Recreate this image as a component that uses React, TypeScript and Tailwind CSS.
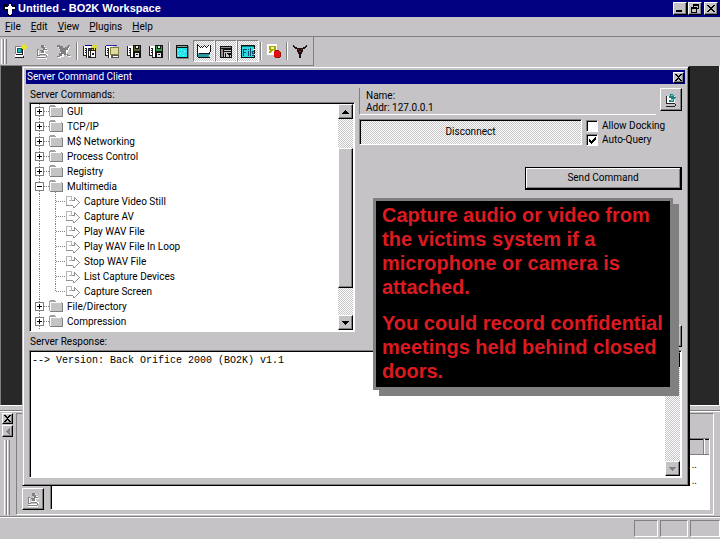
import { useState, type ReactNode } from "react";
import clsx from "clsx";

const raised =
  "border border-t-white border-l-white border-r-black border-b-black shadow-[inset_-1px_-1px_0_#808080] bg-[#c5c3c6]";
const sunken =
  "border border-t-[#808080] border-l-[#808080] border-r-white border-b-white";
const sunkenDeep =
  "border border-t-[#808080] border-l-[#808080] border-r-white border-b-white shadow-[inset_1px_1px_0_#000]";
const dither =
  "bg-[conic-gradient(#fff_25%,#c5c3c6_0_50%,#fff_0_75%,#c5c3c6_0)] bg-[length:2px_2px]";

const menuItems = ["File", "Edit", "View", "Plugins", "Help"];

interface TreeItem {
  label: string;
  kind: "folder" | "command";
  open?: boolean;
  last?: boolean;
}

const treeItems: TreeItem[] = [
  { label: "GUI", kind: "folder" },
  { label: "TCP/IP", kind: "folder" },
  { label: "M$ Networking", kind: "folder" },
  { label: "Process Control", kind: "folder" },
  { label: "Registry", kind: "folder" },
  { label: "Multimedia", kind: "folder", open: true },
  { label: "Capture Video Still", kind: "command" },
  { label: "Capture AV", kind: "command" },
  { label: "Play WAV File", kind: "command" },
  { label: "Play WAV File In Loop", kind: "command" },
  { label: "Stop WAV File", kind: "command" },
  { label: "List Capture Devices", kind: "command" },
  { label: "Capture Screen", kind: "command", last: true },
  { label: "File/Directory", kind: "folder" },
  { label: "Compression", kind: "folder" },
];

function Icon({ w = 16, h = 16, children }: { w?: number; h?: number; children: ReactNode }) {
  return (
    <svg
      width={w}
      height={h}
      viewBox={`0 0 ${w} ${h}`}
      shapeRendering="crispEdges"
      className="shrink-0"
      aria-hidden="true"
    >
      {children}
    </svg>
  );
}

/* Toolbar icons */
const NewServerIcon = () => (
  <Icon>
    <path d="M3 3h9v9H3z" fill="#fff" />
    <path d="M3 3h8v1H4v7H3z" fill="#808080" />
    <path d="M11 5v7H4v-1h6V5zM3 14h9v1H3zM11 13h1v1h-1z" fill="#202020" />
    <path d="M5 5h5v5H5z" fill="#105860" />
    <path d="M6 6h3v3H6z" fill="#18b8c0" />
    <path d="M3 12h8v2H3z" fill="#fff" />
    <path d="M11 1h2v6h-2zM9 3h6v2H9zM10 2h1v1h-1zM13 2h1v1h-1zM10 5h1v1h-1zM13 5h1v1h-1z" fill="#e8e428" />
  </Icon>
);

const ConnectIcon = () => (
  <Icon>
    <path d="M4 7h1v5H4zM4 12h2v1h6v1H4zM6 10h6v1h2v2h-2v-1H6zM10 3h1v2h2v2h1v1h-3v2h-1V7h2V6h-2zM3 15h10v1H3z" fill="#fff" />
    <path d="M3 6h2v1H4v5h2v-1h6v1H6v1H3zM7 2h3v2h1v2h2v1h-3v3H7V8H6V7h3V5H7zM3 14h9v1H3zM12 12h1v2h-1z" fill="#808080" />
  </Icon>
);

const DisconnectIcon = () => (
  <Icon>
    <path d="M2 4h3v1h2v2h2V6h2V5h1V4h2v1h-1v2h-1v2h-1v3h2v1h2v1h-3v-1h-2v-1H8v2H5v1H2v-1h2v-3h2v-1H4V7H3V5H2z" fill="#fff" />
    <path d="M1 2h3v1h3v2h2V4h2V3h1V2h2v1h-1v2h-1v2h-2v4h2v1h2v1h-3v-1H8v-1H6v2H4v1H1v-1h2v-3h2V9H4V6H3V4H1z" fill="#808080" />
    <path d="M7 5h2v3H7zM5 9h4v2H5z" fill="#808080" />
  </Icon>
);

const Pages = () => (
  <>
    <path d="M1 3h8v9H1z" fill="#fff" />
    <path d="M1 3h1v9H1zM1 12h4v1H1zM3 5h1v1H3zM3 7h1v1H3zM3 9h1v1H3zM4 5h1v9H4zM4 14h3v1H4z" fill="#222" />
    <path d="M5 5h8v10H5z" fill="#fff" />
  </>
);

const WorkspaceNewIcon = () => (
  <Icon>
    <Pages />
    <path d="M3 2h7v1H3z" fill="#000080" />
    <path d="M6 5h8v10H6z" fill="#222" />
    <path d="M7 6h5v1H7z" fill="#2828b0" />
    <path d="M7 8h1v5H7zM9 8h4v6H9z" fill="#fff" />
    <path d="M10 10h2v2h-2z" fill="#222" />
    <path d="M10 4h5v1h-5zM12 2h1v5h-1zM10 2h1v1h-1zM14 2h1v1h-1zM10 6h1v1h-1zM14 6h1v1h-1z" fill="#e8e020" />
  </Icon>
);

const WorkspaceOpenIcon = () => (
  <Icon>
    <Pages />
    <path d="M2 2h11v1H2z" fill="#2828b0" />
    <path d="M6 4h9v8H6z" fill="#808040" />
    <path d="M7 5h7v6H7z" fill="#e0dca0" />
    <path d="M7 12h8v3H7z" fill="#555" />
    <path d="M9 13h5v1H9z" fill="#fff" />
  </Icon>
);

const WorkspaceSaveIcon = ({ color }: { color: string }) => (
  <Icon>
    <Pages />
    <path d="M7 2h8v13H7zM5 14h2v1H5z" fill="#111" />
    <path d="M8 3h1v5H8zM13 3h1v5h-1zM9 6h4v2H9z" fill={color} />
    <path d="M10 3h2v2h-2zM9 10h4v4H9z" fill="#e8e8e8" />
    <path d="M10 11h2v1h-2z" fill="#111" />
  </Icon>
);

const WindowIcon = () => (
  <Icon>
    <path d="M3 3h12v13H3z" fill="#808080" />
    <path d="M2 2h12v13H2z" fill="#111" />
    <path d="M3 5h10v9H3z" fill="#22e4ec" />
    <path d="M3 3h10v1H3z" fill="#70a8a8" />
    <path d="M4 7h1v1H4zM7 6h1v1H7zM10 8h1v1h-1zM6 10h1v1H6zM9 12h1v1H9zM4 12h1v1H4z" fill="#a8ffff" />
  </Icon>
);

const TornPageIcon = () => (
  <Icon>
    <path d="M1 2h2v1h1v1h1V3h1v1h1V3h1V2h1v1h1v1h1V3h1V2h2v7h-1v1H1z" fill="#fff" />
    <path d="M1 1h1v13H1zM2 2h1v1H2zM3 3h1v1H3zM4 4h1v1H4zM5 3h1v1H5zM6 4h1v1H6zM7 3h1v1H7zM8 2h1v1H8zM9 3h1v1H9zM10 4h1v1h-1zM11 3h1v1h-1zM12 2h1v1h-1zM14 2h1v7h-1zM13 9h1v1h-1zM2 14h12v1H2z" fill="#111" />
    <path d="M2 11h12v1H2zM2 12h11v2H2z" fill="#2a9aa0" />
    <path d="M2 5h12v4H2z" fill="#fff" />
    <path d="M3 10h11v1H3z" fill="#111" />
  </Icon>
);

const DockIcon = () => (
  <Icon>
    <path d="M2 3h12v12H2z" fill="#111" />
    <path d="M3 4h10v1H3zM3 6h2v8H3z" fill="#909090" />
    <path d="M6 7h7v7H6z" fill="#c8c8c8" />
    <path d="M6 8h7v1H6zM7 10h1v4H7zM9 10h5v1H9zM10 11h3v1h-3zM11 12h1v2h-1z" fill="#111" />
  </Icon>
);

const FileWindowIcon = () => (
  <Icon>
    <path d="M1 2h14v13H1z" fill="#111" />
    <path d="M2 4h12v10H2z" fill="#28dce4" />
    <path d="M2 3h12v1H2z" fill="#008080" />
    <path
      d="M3 6h4v1H4v2h2v1H4v3H3zM8 6h1v1H8zM8 8h1v5H8zM10 5h1v8h-1zM12 8h2v1h-1v1h1v1h-2v1h2v1h-2z"
      fill="#064a70"
    />
    <path d="M13 6h2v1h-2zM14 11h1v1h-1z" fill="#fff" />
  </Icon>
);

const PluginIcon = () => (
  <Icon>
    <path d="M1 1h10v11H1z" fill="#fff" />
    <path d="M3 3h7v5H8V7H7v1H6v1H5v1H3V8h1V7H3z" fill="#a8a800" />
    <path d="M5 4h3v2H5z" fill="#f4f0b0" />
    <path d="M8 8h6v6H8z" fill="#e01010" />
    <path d="M9 7h4v1H9zM14 9h1v5h-1zM9 14h5v1H9z" fill="#901010" />
  </Icon>
);

const BullIcon = () => (
  <Icon>
    <path
      d="M1 2h1v1h1v1h2v1h6V4h2V3h1V2h1v2h-1v1h-1v1h-2v3h-1v2H9v4H7v-4H6V9H5V6H3V5H2V4H1z"
      fill="#1a1010"
    />
    <path d="M6 6h1v1H6zM9 6h1v1H9zM7 8h2v1H7z" fill="#b02020" />
  </Icon>
);

function ToolButton({ label, pressed, children }: { label: string; pressed?: boolean; children: ReactNode }) {
  return (
    <button
      type="button"
      aria-label={label}
      aria-pressed={pressed}
      className={clsx(
        "flex h-[22px] w-[22px] items-center justify-center",
        pressed && sunken,
        pressed && dither
      )}
    >
      {children}
    </button>
  );
}

const Separator = () => <div className="mx-px h-[18px] w-[2px] border-l border-[#808080] bg-white" />;

function CaptionButton({ label, children }: { label: string; children: ReactNode }) {
  return (
    <button type="button" aria-label={label} className={clsx("flex h-[13px] w-[14px] items-center justify-center", raised)}>
      <Icon w={10} h={9}>{children}</Icon>
    </button>
  );
}

function CloseBox({ label }: { label: string }) {
  return (
    <button type="button" aria-label={label} className={clsx("flex h-[11px] w-[11px] items-center justify-center", raised)}>
      <Icon w={7} h={7}>
        <path d="M0 0h2v1h1v1h1V1h1V0h2v1H6v1H5v1H4v1h1v1h1v1h1v1H5V6H4V5H3v1H2v1H0V6h1V5h1V4h1V3H2V2H1V1H0z" fill="#000" />
      </Icon>
    </button>
  );
}

function ArrowButton({ up, disabled }: { up?: boolean; disabled?: boolean }) {
  return (
    <button
      type="button"
      disabled={disabled}
      aria-label={up ? "Scroll up" : "Scroll down"}
      className={clsx("flex h-[15px] w-full shrink-0 items-center justify-center", raised)}
    >
      <Icon w={7} h={4}>
        <path d={up ? "M3 0h1v1h1v1h1v1h1v1H0V3h1V2h1V1h1z" : "M0 0h7v1H6v1H5v1H4v1H3V3H2V2H1V1H0z"} fill={disabled ? "#808080" : "#000"} />
      </Icon>
    </button>
  );
}

const dots = { stroke: "#808080", strokeWidth: 1, strokeDasharray: "1 1" };

function TreeRow({ item }: { item: TreeItem }) {
  const isFolder = item.kind === "folder";
  return (
    <li className="flex h-[15px] items-center gap-1 whitespace-nowrap">
      {isFolder ? (
        <Icon w={32} h={15}>
          <path d="M8.5 0v15M13 7.5h5" {...dots} />
          {item.open && <path d="M24.5 13v2" {...dots} />}
          <rect x="4.5" y="3.5" width="8" height="8" fill="#fff" stroke="#808080" />
          <path d={item.open ? "M6 7h5v1H6z" : "M6 7h5v1H6zM8 5h1v5H8z"} fill="#000" />
          <path d="M19 1h5v1h1v1h6v1H19z" fill="#a0a0a0" />
          <path d="M18 2h1v10h-1zM19 3h12v9H19z" fill="#a0a0a0" />
          <path d="M20 4h11v8H20z" fill="#c4c4c4" />
          <path d="M19 3h11v1H19zM19 4h1v8h-1z" fill="#fff" />
          <path d="M31 4h1v9H19v-1h12z" fill="#808080" />
        </Icon>
      ) : (
        <Icon w={49} h={15}>
          <path d={item.last ? "M8.5 0v15M24.5 0v8M25 7.5h9" : "M8.5 0v15M24.5 0v15M25 7.5h9"} {...dots} />
          <path d="M35 2h1v9h-1zM36 2h4v1h-4zM40 2h1v5h-1zM38 6h2v1h-2z" fill="#b8b8b8" />
          <path d="M35 11h7v1h-7zM41 6h2v1h-2zM42 12h1v2h-1zM43 3h1v4h-1zM44 4h1v1h-1zM45 5h1v1h-1zM46 6h1v1h-1zM47 7h1v1h-1zM48 8h1v1h-1zM47 9h1v1h-1zM46 10h1v1h-1zM45 11h1v1h-1zM44 12h1v1h-1zM43 13h1v1h-1z" fill="#909090" />
        </Icon>
      )}
      <span>{item.label}</span>
    </li>
  );
}

function DialogCheckbox({ label, checked, onChange }: { label: string; checked: boolean; onChange: () => void }) {
  return (
    <label className="flex h-[14px] items-center gap-1">
      <span className={clsx("relative flex h-[12px] w-[12px] items-center justify-center bg-white", sunkenDeep)}>
        <input type="checkbox" checked={checked} onChange={onChange} className="absolute inset-0 m-0 opacity-0" />
        {checked && (
          <Icon w={7} h={7}>
            <path d="M0 2h1v1h1v1h1V3h1V2h1V1h1V0h1v3H6v1H5v1H4v1H3v1H2V6H1V5H0z" fill="#000" />
          </Icon>
        )}
      </span>
      {label}
    </label>
  );
}

function ServerCommandDialog() {
  const [allowDocking, setAllowDocking] = useState(false);
  const [autoQuery, setAutoQuery] = useState(true);

  return (
    <section
      aria-label="Server Command Client"
      className="absolute top-[66px] right-[30px] bottom-[54px] left-[22px] flex flex-col border-t border-r-2 border-b border-l border-t-[#c5c3c6] border-r-black border-b-black border-l-[#c5c3c6] bg-[#c5c3c6] p-[3px] shadow-[inset_1px_1px_0_#fff,inset_-1px_-1px_0_#808080]"
    >
      <header className="flex h-[14px] shrink-0 items-center justify-between bg-[#000080] pr-px pl-px text-white">
        <h2>Server Command Client</h2>
        <CloseBox label="Close dialog" />
      </header>

      <div className="flex min-h-0 flex-1 flex-col pr-[3px] pb-1 pl-[3px]">
        <div className="flex pt-1">
          {/* Command tree */}
          <div className="flex w-[326px] shrink-0 flex-col">
            <h3 className="h-[14px] pl-px leading-[14px]">Server Commands:</h3>
            <div className={clsx("flex h-[230px] bg-white p-px", sunkenDeep)}>
              <ul className="min-w-0 flex-1 overflow-hidden">
                {treeItems.map((item) => (
                  <TreeRow key={item.label} item={item} />
                ))}
              </ul>
              <div className={clsx("flex w-[15px] shrink-0 flex-col", dither)}>
                <ArrowButton up />
                <div className={clsx("mt-[29px] h-[140px]", raised)} />
                <div className="flex-1" />
                <ArrowButton />
              </div>
            </div>
            <label htmlFor="response" className="h-[18px] pt-[3px] pl-px leading-[14px]">
              Server Response:
            </label>
          </div>

          {/* Connection panel */}
          <div className="flex min-w-0 flex-1 flex-col pb-[3px] pl-1">
            <div className="flex items-start gap-1">
              <div className="h-[27px] min-w-0 flex-1 border-b border-l border-b-white border-l-[#808080] pt-[2px] pl-[6px] leading-[12px]">
                <p>Name:</p>
                <p>Addr: 127.0.0.1</p>
              </div>
              <button type="button" aria-label="Server properties" className={clsx("flex h-[23px] w-[22px] items-center justify-center", raised)}>
                <Icon w={12} h={14}>
                  <path d="M2 3h8v7H2z" fill="#fff" />
                  <path d="M1 3h1v7h8v1H1zM1 13h9v1H1zM10 11h1v2h-1z" fill="#222" />
                  <path d="M5 1h3v1h1v2h2v1h-1v1H9v3H4V7h2V5H4V3h1z" fill="#1c8080" />
                  <path d="M6 2h2v1H6zM6 6h2v2H6z" fill="#70d0d0" />
                </Icon>
              </button>
            </div>
            <div className="mt-[4px] flex items-start gap-1">
              <button type="button" className={clsx("h-[26px] min-w-0 flex-1", sunkenDeep, dither)}>
                Disconnect
              </button>
              <div className="w-[96px]">
                <DialogCheckbox label="Allow Docking" checked={allowDocking} onChange={() => setAllowDocking(!allowDocking)} />
                <DialogCheckbox label="Auto-Query" checked={autoQuery} onChange={() => setAutoQuery(!autoQuery)} />
              </div>
            </div>
            <button type="button" className="mt-5 h-[23px] w-[157px] self-end border border-r-2 border-b-2 border-black shadow-[inset_1px_1px_0_#fff,inset_-1px_-1px_0_#808080]">
              Send Command
            </button>
            <button
              type="button"
              aria-label="Clear response"
              className={clsx("mt-auto h-[22px] w-[80px] self-end", raised)}
            />
          </div>
        </div>

        {/* Server response */}
        <div className={clsx("flex min-h-0 flex-1 bg-white p-px", sunkenDeep)}>
          <textarea
            id="response"
            readOnly
            defaultValue="--> Version: Back Orifice 2000 (BO2K) v1.1"
            className="min-w-0 flex-1 resize-none overflow-hidden pt-[3px] pl-px font-['Liberation_Mono',monospace] text-[10px] leading-[12px] outline-none"
          />
          <div className={clsx("flex w-[15px] shrink-0 flex-col justify-between", dither)}>
            <ArrowButton up disabled />
            <ArrowButton disabled />
          </div>
        </div>
      </div>
    </section>
  );
}

export default function App() {
  return (
    <div className="relative flex min-h-screen flex-col overflow-hidden bg-[#c5c3c6] font-[Roboto,'Liberation_Sans',sans-serif] text-[10px] leading-none text-black">
      {/* Title bar */}
      <header className="flex h-[17px] items-center bg-[#000080] pr-[2px] pl-[3px] text-white">
        <Icon w={14} h={14}>
          <path d="M1 2h3v2h2V1h3v3h2V3h2v5h-3v1H9v5H5V9H3V8H0V4h1z" fill="#000" />
          <path d="M6 2h2v2h1v1h3v2H9v5H8v1H6v-1H5V7H2V5h3V4h1z" fill="#fff" />
        </Icon>
        <h1 className="flex-1 pl-px font-['Liberation_Sans',sans-serif] text-[11px] font-bold">Untitled - BO2K Workspace</h1>
        <div className="flex gap-px">
          <CaptionButton label="Minimize">
            <path d="M1 6h6v2H1z" fill="#000" />
          </CaptionButton>
          <CaptionButton label="Restore">
            <path d="M3 0h6v5H7V4h1V2H4v1H3zM1 3h6v6H1zM2 5v3h4V5z" fill="#000" fillRule="evenodd" />
          </CaptionButton>
          <div className="pl-px">
            <CaptionButton label="Close">
              <path d="M1 1h2v1h1v1h2V2h1V1h2v1H8v1H7v1H6v1h1v1h1v1h1v1H7V7H6V6H4v1H3v1H1V7h1V6h1V5h1V4H3V3H2V2H1z" fill="#000" />
            </CaptionButton>
          </div>
        </div>
      </header>

      {/* Menu */}
      <nav className="flex h-[20px] items-center gap-[10px] border-b border-[#808080] pl-[5px]">
        {menuItems.map((item) => (
          <button key={item} type="button">
            <span className="underline">{item[0]}</span>
            {item.slice(1)}
          </button>
        ))}
      </nav>

      {/* Toolbar */}
      <div className="flex h-[29px] shrink-0">
        <div className="flex items-center border-r border-b border-[#808080] pr-[2px] pl-px">
          <div className="mr-[2px] flex h-[25px]">
            <div className="w-[3px] border-r border-l border-l-white border-r-[#808080]" />
            <div className="w-[3px] border-r border-l border-l-white border-r-[#808080]" />
          </div>
          <ToolButton label="New server"><NewServerIcon /></ToolButton>
          <ToolButton label="Connect"><ConnectIcon /></ToolButton>
          <ToolButton label="Remove server"><DisconnectIcon /></ToolButton>
          <Separator />
          <ToolButton label="New workspace"><WorkspaceNewIcon /></ToolButton>
          <ToolButton label="Open workspace"><WorkspaceOpenIcon /></ToolButton>
          <ToolButton label="Save workspace"><WorkspaceSaveIcon color="#606030" /></ToolButton>
          <ToolButton label="Save workspace as"><WorkspaceSaveIcon color="#20a040" /></ToolButton>
          <Separator />
          <ToolButton label="Workspace window"><WindowIcon /></ToolButton>
          <ToolButton label="Server list" pressed><TornPageIcon /></ToolButton>
          <ToolButton label="Docked windows" pressed><DockIcon /></ToolButton>
          <ToolButton label="File window" pressed><FileWindowIcon /></ToolButton>
          <Separator />
          <ToolButton label="Plugins"><PluginIcon /></ToolButton>
          <Separator />
          <ToolButton label="About"><BullIcon /></ToolButton>
        </div>
      </div>

      {/* Client area */}
      <main className="flex-1 border-r border-l border-l-[#808080] border-r-white bg-[#282828]" />

      {/* Docked server list */}
      <div className="flex h-[111px] shrink-0 flex-col border-t border-white">
        <div className="h-[5px] border-b border-[#808080]" />
        <div className="flex min-h-0 flex-1 border-t border-white pt-px pb-px">
          <div className="flex w-[16px] flex-col items-center gap-px pr-[2px]">
            <CloseBox label="Close server list" />
            <button type="button" aria-label="Collapse" className={clsx("flex h-[12px] w-[11px] items-center justify-center", raised)}>
              <Icon w={5} h={7}>
                <path d="M4 0h1v7H4V6H3V5H2V4H1V3h1V2h1V1h1z" fill="#808080" />
              </Icon>
            </button>
            <div className="mt-[2px] flex flex-1">
              <div className="w-[3px] border-r border-l border-l-white border-r-[#808080]" />
              <div className="w-[3px] border-r border-l border-l-white border-r-[#808080]" />
            </div>
          </div>
          <div className={clsx("mr-[6px] flex min-w-0 flex-1 items-end pr-[3px] pb-1 pl-[5px]", sunken)}>
            <button type="button" aria-label="Connect server" className={clsx("mr-[6px] flex h-[22px] w-[22px] items-center justify-center", raised)}>
              <ConnectIcon />
            </button>
            <div className={clsx("h-[72px] min-w-0 flex-1 bg-white", sunkenDeep)}>
              <div className="flex h-[16px] border-b border-[#808080] bg-[#c5c3c6] shadow-[inset_1px_1px_0_#000]">
                <div className="flex-1 border-r border-[#808080]" />
                <div className="w-[5px] border-l border-white" />
              </div>
              <div className="flex flex-col items-end pt-[5px] pr-[12px]">
                <span className="h-[16px]">..</span>
                <span className="h-[16px]">..</span>
              </div>
            </div>
          </div>
        </div>
      </div>

      {/* Status bar */}
      <footer className="flex h-[24px] shrink-0 justify-end gap-[2px] border-t border-[#808080] pt-[3px] pb-[3px] shadow-[inset_0_1px_0_#fff,inset_0_-1px_0_#fff]">
        <div className={clsx("w-[24px]", sunken)} />
        <div className={clsx("w-[28px]", sunken)} />
        <div className={clsx("w-[30px]", sunken)} />
      </footer>

      <ServerCommandDialog />

      {/* Caption over the dialog */}
      <aside className="absolute top-[198px] left-[373px] w-[300px] border-[3px] border-[#808080] bg-black pt-[2px] pb-1 pl-[6px] font-['Liberation_Sans',sans-serif] text-[20px] leading-[24px] font-bold text-[#dc1a20] shadow-[6px_6px_0_#808080]">
        <p>
          Capture audio or video from the victims system if a microphone or camera is attached.
        </p>
        <p className="mt-[12px]">
          You could record confidential meetings held behind closed doors.
        </p>
      </aside>
    </div>
  );
}
